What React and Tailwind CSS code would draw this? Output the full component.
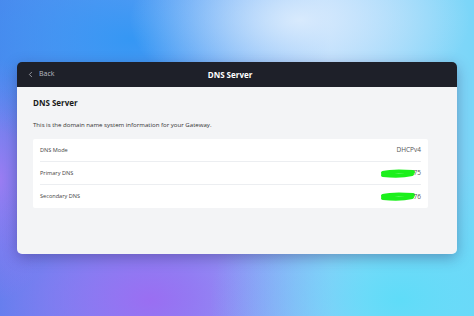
import React from 'react';
import { ChevronLeft } from 'lucide-react';

const rows = [
  { label: 'DNS Mode', value: 'DHCPv4' },
  { label: 'Primary DNS', value: '75', hidden: true },
  { label: 'Secondary DNS', value: '76', hidden: true },
];

const Scribble = () => (
  <svg width="36" height="9" viewBox="0 0 36 9" className="-mr-[2px]">
    <path d="M3 4 C10 2, 20 2, 33 3 M3 6 C12 7, 24 7, 32 5" stroke="#1cf01c" strokeWidth="4" strokeLinecap="round" fill="none" />
  </svg>
);

export default function App() {
  return (
    <div
      className="w-[474px] h-[316px] overflow-hidden flex flex-col pt-[62px] px-[17px] font-['Open_Sans',sans-serif] bg-[radial-gradient(ellipse_170px_90px_at_300px_20px,#d8eafd_0%,rgba(216,234,253,0)_100%),radial-gradient(ellipse_200px_120px_at_130px_40px,#3597f4_0%,rgba(53,151,244,0)_100%),radial-gradient(ellipse_190px_140px_at_400px_300px,#5fdcf8_0%,rgba(95,220,248,0)_100%),radial-gradient(ellipse_220px_150px_at_150px_300px,#9a6ef2_0%,rgba(154,110,242,0)_100%),radial-gradient(ellipse_60px_120px_at_0px_180px,#9a7cf2_0%,rgba(154,124,242,0)_100%),linear-gradient(90deg,#4f86ec_0%,#7aa8f6_40%,#a9d6fb_70%,#7ad6f8_100%)]"
    >
      <div className="rounded-[5px] overflow-hidden shadow-[0_4px_14px_rgba(40,30,90,0.35)] flex flex-col h-[192px]">
        <div className="h-[25px] bg-[#1e2029] flex items-center relative">
          <div className="flex items-center pl-[9px] gap-[4px] text-[#b9bcc4] text-[7px] z-10">
            <ChevronLeft size={9} strokeWidth={2} />
            <span>Back</span>
          </div>
          <div className="absolute inset-0 pr-[14px] flex items-center justify-center text-white text-[8px] font-bold">
            DNS Server
          </div>
        </div>
        <div className="flex-1 bg-[#f3f4f6] pl-[16px] pr-[29px] pt-[10px]">
          <div className="text-[8px] font-bold text-[#1a1a1a] leading-[12px]">DNS Server</div>
          <div className="mt-[11px] text-[6.1px] text-[#333] leading-[10px]">
            This is the domain name system information for your Gateway.
          </div>
          <div className="mt-[9px] bg-white rounded-[2px] px-[7px]">
            {rows.map((r, i) => (
              <div
                key={r.label}
                className={`h-[23px] flex items-center justify-between ${i < rows.length - 1 ? 'border-b border-[#eceef1]' : ''}`}
              >
                <span className="text-[5.6px] text-[#444]">{r.label}</span>
                <span className="flex items-center text-[6.5px] text-[#555]">
                  {r.hidden && <Scribble />}
                  {r.value}
                </span>
              </div>
            ))}
          </div>
        </div>
      </div>
    </div>
  );
}
